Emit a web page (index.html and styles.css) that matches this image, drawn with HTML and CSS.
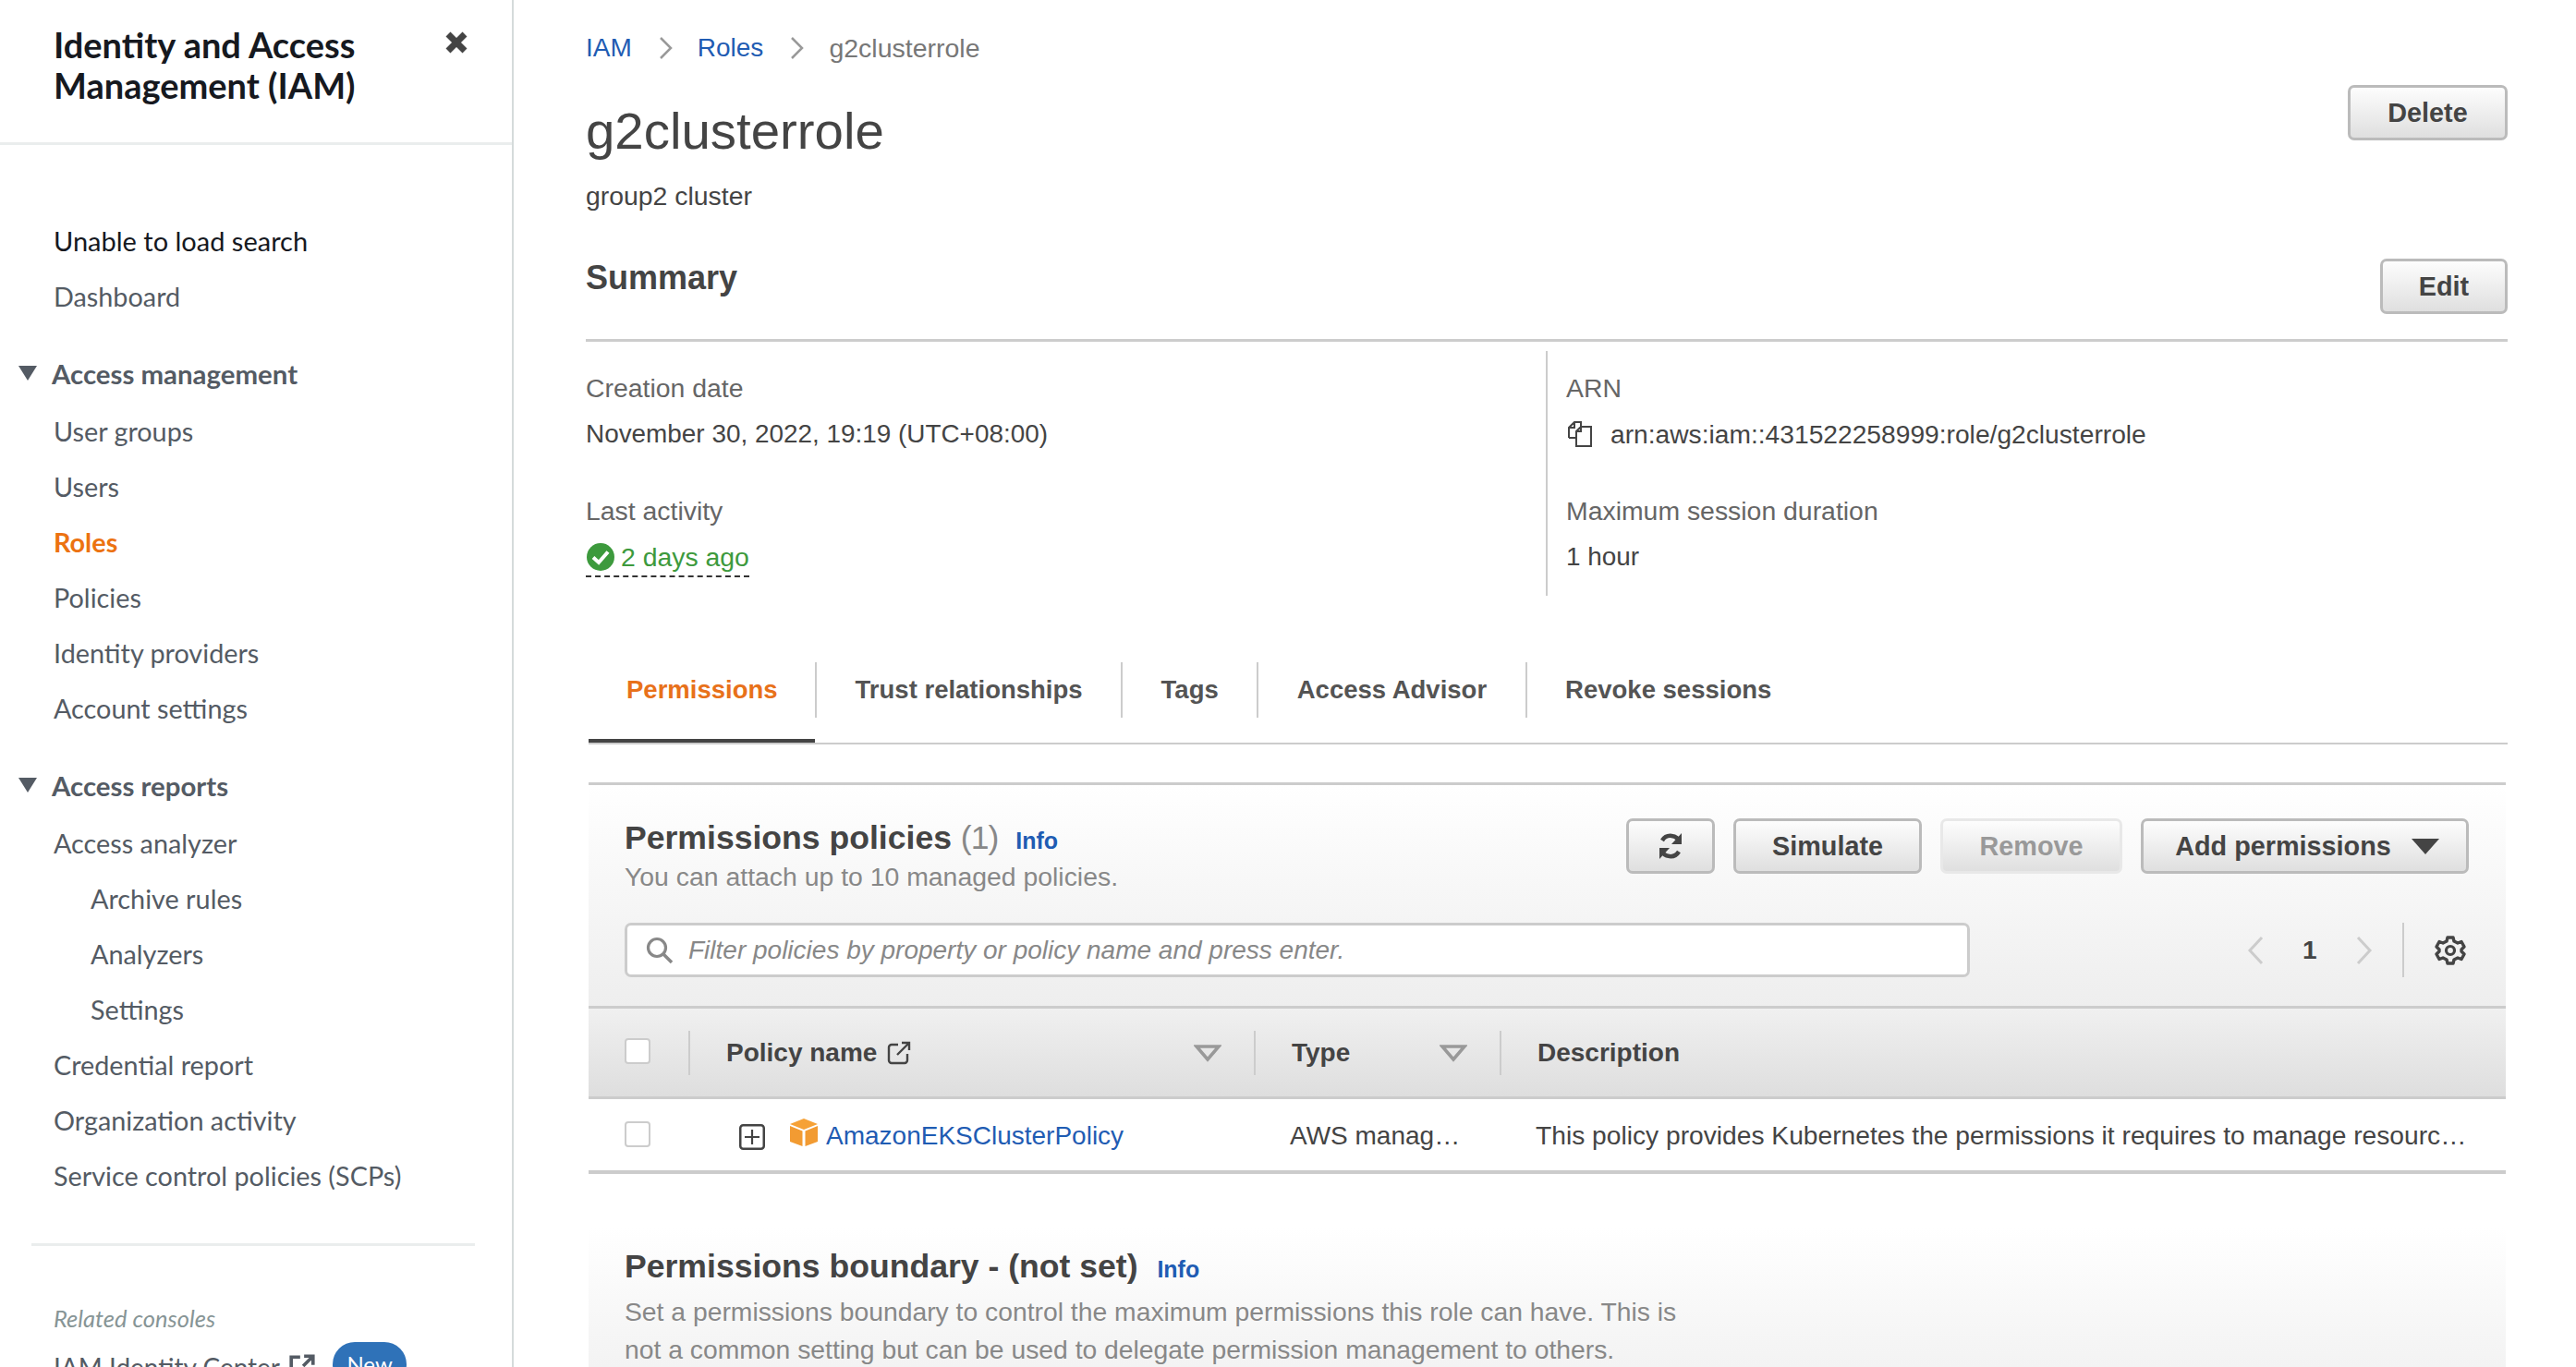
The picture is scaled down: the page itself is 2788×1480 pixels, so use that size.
FILE: index.html

```html
<!DOCTYPE html>
<html lang="en">
<head>
  <meta charset="UTF-8" />
  <title>g2clusterrole - IAM</title>
  <link rel="stylesheet" href="styles.css">
</head>
<body>
  <div class="page">
    <aside class="sidebar">
      <div class="side-head">
        <div class="side-title">Identity and Access<br>Management (IAM)</div>
        <svg class="side-close" width="28" height="28" viewBox="0 0 28 28"><path d="M5 5 L23 23 M23 5 L5 23" stroke="#444" stroke-width="7" fill="none"/></svg>
      </div>
      <nav class="side-nav">
        <a class="nav-item nav-dark">Unable to load search</a>
        <a class="nav-item">Dashboard</a>

        <div class="nav-group"><span class="nav-caret"></span>Access management</div>
        <a class="nav-item">User groups</a>
        <a class="nav-item">Users</a>
        <a class="nav-item nav-active">Roles</a>
        <a class="nav-item">Policies</a>
        <a class="nav-item">Identity providers</a>
        <a class="nav-item">Account settings</a>

        <div class="nav-group"><span class="nav-caret"></span>Access reports</div>
        <a class="nav-item">Access analyzer</a>
        <a class="nav-item nav-sub">Archive rules</a>
        <a class="nav-item nav-sub">Analyzers</a>
        <a class="nav-item nav-sub">Settings</a>
        <a class="nav-item">Credential report</a>
        <a class="nav-item">Organization activity</a>
        <a class="nav-item">Service control policies (SCPs)</a>

        <div class="nav-divider"></div>
        <div class="nav-related">Related consoles</div>
        <a class="nav-item nav-console">IAM Identity Center
          <svg class="ext-icon" width="30" height="30" viewBox="0 0 28 28"><path d="M12 4 H3 V25 H24 V16 M15 13 L25 3 M16 3 H25 V12" stroke="#545b64" stroke-width="3.4" fill="none"/></svg>
          <span class="new-badge">New</span>
        </a>
      </nav>
    </aside>

    <main class="main">
      <div class="crumbs">
        <a class="link">IAM</a>
        <svg class="crumb-sep" width="18" height="28" viewBox="0 0 18 28"><path d="M3 3 L14 14 L3 25" stroke="#999" stroke-width="2.5" fill="none"/></svg>
        <a class="link">Roles</a>
        <svg class="crumb-sep" width="18" height="28" viewBox="0 0 18 28"><path d="M3 3 L14 14 L3 25" stroke="#999" stroke-width="2.5" fill="none"/></svg>
        <span class="crumb-current">g2clusterrole</span>
      </div>

      <div class="title-row">
        <h1>g2clusterrole</h1>
        <button class="btn btn-delete">Delete</button>
      </div>
      <p class="role-desc">group2 cluster</p>

      <div class="summary-head">
        <h2>Summary</h2>
        <button class="btn btn-edit">Edit</button>
      </div>
      <div class="summary-cols">
        <div class="summary-col">
          <div class="field">
            <div class="field-label">Creation date</div>
            <div class="field-value">November 30, 2022, 19:19 (UTC+08:00)</div>
          </div>
          <div class="field">
            <div class="field-label">Last activity</div>
            <div class="field-value"><span class="activity">
              <svg width="32" height="32" viewBox="0 0 32 32"><circle cx="16" cy="16" r="15" fill="#3d9a3d"/><path d="M8 16.5 L14 22 L24 10.5" stroke="#fff" stroke-width="4" fill="none"/></svg>
              2 days ago</span></div>
          </div>
        </div>
        <div class="summary-col summary-right">
          <div class="field">
            <div class="field-label">ARN</div>
            <div class="field-value arn">
              <svg width="30" height="30" viewBox="0 0 30 30"><path d="M3 19 V8 L9 2 H16 V7 M9 2 V8 H3 M3 19 H10 M11 12 L16 7 H27 V28 H11 Z M16 7 V12 H11" stroke="#444" stroke-width="2" fill="none"/></svg>
              arn:aws:iam::431522258999:role/g2clusterrole
            </div>
          </div>
          <div class="field">
            <div class="field-label">Maximum session duration</div>
            <div class="field-value">1 hour</div>
          </div>
        </div>
      </div>

      <div class="tabs">
        <a class="tab tab-active">Permissions</a>
        <span class="tab-sep"></span>
        <a class="tab">Trust relationships</a>
        <span class="tab-sep"></span>
        <a class="tab">Tags</a>
        <span class="tab-sep"></span>
        <a class="tab">Access Advisor</a>
        <span class="tab-sep"></span>
        <a class="tab">Revoke sessions</a>
      </div>

      <section class="panel">
        <div class="panel-head">
          <div class="panel-top">
            <div class="panel-titles">
              <h3>Permissions policies <span class="count">(1)</span> <a class="info">Info</a></h3>
              <p class="panel-sub">You can attach up to 10 managed policies.</p>
            </div>
            <div class="panel-actions">
              <button class="btn btn-refresh">
                <svg width="30" height="34" viewBox="0 0 30 34"><path d="M25 13 A10.500 10.500 0 0 0 6 11 M5 21 A10.500 10.500 0 0 0 24 23" stroke="#444" stroke-width="4.500" fill="none"/><path d="M27 3 V15 H16 Z M3 31 V19 H14 Z" fill="#444"/></svg>
              </button>
              <button class="btn btn-simulate">Simulate</button>
              <button class="btn btn-remove">Remove</button>
              <button class="btn btn-add">Add permissions <span class="btn-caret"></span></button>
            </div>
          </div>
          <div class="filter-row">
            <div class="search">
              <svg width="32" height="32" viewBox="0 0 32 32"><circle cx="13" cy="13" r="9.5" stroke="#888" stroke-width="3.2" fill="none"/><path d="M20 20 L29 29" stroke="#888" stroke-width="3.6"/></svg>
              <span class="search-text">Filter policies by property or policy name and press enter.</span>
            </div>
            <div class="pager">
              <svg width="22" height="34" viewBox="0 0 22 34"><path d="M18 3 L5 17 L18 31" stroke="#ccc" stroke-width="3" fill="none"/></svg>
              <span class="page-num">1</span>
              <svg width="22" height="34" viewBox="0 0 22 34"><path d="M4 3 L17 17 L4 31" stroke="#ccc" stroke-width="3" fill="none"/></svg>
            </div>
            <div class="pager-gear">
              <svg width="34" height="34" viewBox="0 0 34 34"><path d="M14 3 H20 L21 7 L25 9 L29 7.500 L32 13 L29 16 V18 L32 21 L29 26.500 L25 25 L21 27 L20 31 H14 L13 27 L9 25 L5 26.500 L2 21 L5 18 V16 L2 13 L5 7.500 L9 9 L13 7 Z" stroke="#444" stroke-width="3.400" fill="none" stroke-linejoin="round"/><circle cx="17" cy="17" r="4.500" stroke="#444" stroke-width="3.200" fill="none"/></svg>
            </div>
          </div>
        </div>

        <div class="table-grid table-head">
          <div class="cell-check"><span class="checkbox"></span></div>
          <div class="th th-name">
            <span class="th-label">Policy name
              <svg width="28" height="28" viewBox="0 0 28 28"><path d="M13 5 H6 A3 3 0 0 0 3 8 V22 A3 3 0 0 0 6 25 H20 A3 3 0 0 0 23 22 V15 M12 16 L25 3 M17 3 H25 V11" stroke="#444" stroke-width="2.400" fill="none"/></svg>
            </span>
            <svg class="sort" width="30" height="20" viewBox="0 0 30 20"><path d="M3 3 H27 L15 17 Z" stroke="#999" stroke-width="3.500" fill="none"/></svg>
          </div>
          <div class="th th-type">
            <span class="th-label">Type</span>
            <svg class="sort" width="30" height="20" viewBox="0 0 30 20"><path d="M3 3 H27 L15 17 Z" stroke="#999" stroke-width="3.500" fill="none"/></svg>
          </div>
          <div class="th th-desc"><span class="th-label">Description</span></div>
        </div>

        <div class="table-grid table-row">
          <div class="cell-check"><span class="checkbox"></span></div>
          <div class="td-name">
            <svg class="expand" width="28" height="28" viewBox="0 0 28 28"><rect x="1.250" y="1.250" width="25.500" height="25.500" rx="3" stroke="#444" stroke-width="2.500" fill="none"/><path d="M14 6 V22 M6 14 H22" stroke="#444" stroke-width="2.200"/></svg>
            <svg class="cube" width="32" height="32" viewBox="0 0 32 32"><path d="M16 1 L31 7 L16 13 L1 7 Z" fill="#f6a136"/><path d="M1 9 L14.500 14.500 V31 L1 26 Z M31 9 L17.500 14.500 V31 L31 26 Z" fill="#f29b32"/></svg>
            <a class="link">AmazonEKSClusterPolicy</a>
          </div>
          <div class="td-type">AWS manag…</div>
          <div class="td-desc">This policy provides Kubernetes the permissions it requires to manage resourc…</div>
        </div>
      </section>

      <section class="panel-boundary">
        <h3>Permissions boundary - (not set) <a class="info info-boundary">Info</a></h3>
        <p class="boundary-text">Set a permissions boundary to control the maximum permissions this role can have. This is not a common setting but can be used to delegate permission management to others.</p>
      </section>
    </main>
  </div>
</body>
</html>
```

FILE: styles.css

```css
* {
  box-sizing: border-box;
}
html, body {
  margin: 0;
  height: 100%;
  overflow: hidden;
  background: #fff;
}
body {
  font-family: "Liberation Sans", Arial, sans-serif;
  font-size: 28px;
  color: #444;
}
h1, h2, h3, p {
  margin: 0;
}
.page {
  display: flex;
  height: 1480px;
  overflow: hidden;
}

/* sidebar */
.sidebar {
  width: 556px;
  flex: none;
  border-right: 2px solid #d5dbdb;
  font-family: "Lato", "Noto Sans", sans-serif;
  color: #545b64;
  overflow: hidden;
}
.side-head {
  height: 157px;
  padding: 26px 40px 0 58px;
  display: flex;
  justify-content: space-between;
  border-bottom: 3px solid #eaeded;
}
.side-title {
  font-size: 38px;
  line-height: 44px;
  font-weight: bold;
  color: #16191f;
}
.side-close {
  margin: 6px 6px 0 0;
}
.side-nav {
  padding-top: 74px;
}
.nav-item {
  display: block;
  height: 60px;
  line-height: 60px;
  padding-left: 58px;
  font-size: 28.8px;
}
.nav-dark {
  color: #16191f;
  font-size: 29px;
}
.nav-active {
  color: #ec7211;
  font-weight: bold;
}
.nav-sub {
  padding-left: 98px;
}
.nav-group {
  display: flex;
  align-items: center;
  height: 60px;
  margin: 23px 0 3px;
  padding-left: 20px;
  font-size: 29.4px;
  font-weight: bold;
}
.nav-caret {
  width: 0;
  height: 0;
  margin-right: 16px;
  border-left: 10px solid transparent;
  border-right: 10px solid transparent;
  border-top: 16px solid #545b64;
}
.nav-divider {
  height: 3px;
  margin: 43px 40px 0 34px;
  background: #eaeded;
}
.nav-related {
  margin-top: 60px;
  padding-left: 58px;
  height: 36px;
  line-height: 36px;
  font-size: 25.5px;
  font-style: italic;
  color: #879596;
}
.nav-console {
  display: flex;
  align-items: center;
  gap: 9px;
  height: 60px;
  margin-top: 5px;
  font-size: 28px;
}
.new-badge {
  width: 80px;
  height: 48px;
  margin: -6px 0 0 9px;
  border-radius: 24px;
  background: #2f72b8;
  color: #fff;
  font-size: 24px;
  line-height: 48px;
  text-align: center;
  flex: none;
}

/* main column */
.main {
  flex: 1;
  min-width: 0;
  padding: 30px 74px 0 78px;
}
.link {
  color: #1f5cb3;
}
.crumbs {
  display: flex;
  align-items: center;
  height: 44px;
  margin-bottom: 18px;
}
.crumb-sep {
  margin: 0 25px 0 28px;
}
.crumb-current {
  color: #777;
  font-size: 28.5px;
}
.title-row {
  display: flex;
  justify-content: space-between;
  align-items: flex-start;
}
h1 {
  margin-top: 12px;
  font-size: 56.4px;
  line-height: 76px;
  font-weight: normal;
}
.role-desc {
  margin-top: 12px;
  line-height: 40px;
  font-size: 28.4px;
}
.btn {
  display: inline-flex;
  align-items: center;
  justify-content: center;
  height: 60px;
  padding: 0;
  border: 3px solid #bbb;
  border-radius: 7px;
  background: linear-gradient(#fdfdfd, #dfdfdf);
  font-family: "Liberation Sans", Arial, sans-serif;
  font-size: 28.8px;
  font-weight: bold;
  color: #444;
}
.btn-delete {
  width: 173px;
}
.btn-edit {
  width: 138px;
  margin-top: 1px;
}
.summary-head {
  display: flex;
  justify-content: space-between;
  align-items: flex-start;
  height: 91px;
  margin-top: 47px;
  border-bottom: 3px solid #ccc;
}
h2 {
  font-size: 36px;
  line-height: 44px;
}
.summary-cols {
  display: grid;
  grid-template-columns: 1039px 1fr;
  grid-template-rows: 265px;
  margin-top: 10px;
}
.summary-col {
  padding-top: 20px;
}
.summary-right {
  border-left: 2px solid #ccc;
  padding-left: 20px;
}
.field {
  margin-bottom: 43px;
}
.field:last-child {
  margin-bottom: 0;
}
.field-label {
  line-height: 40px;
  margin-bottom: 10px;
  font-size: 28.4px;
  color: #666;
}
.field-value {
  line-height: 40px;
  font-size: 27.9px;
}
.activity {
  display: inline-flex;
  align-items: center;
  gap: 6px;
  height: 42px;
  vertical-align: top;
  font-size: 28.4px;
  color: #3d9a3d;
  border-bottom: 2px dashed #333;
}
.arn {
  display: flex;
  align-items: center;
  gap: 18px;
  font-size: 28.2px;
  margin-top: 1px;
}

/* tabs */
.tabs {
  display: flex;
  height: 116px;
  margin: 45px 0 0 3px;
  border-bottom: 2px solid #ccc;
}
.tab {
  display: flex;
  align-items: center;
  padding: 0 41.5px;
  font-size: 27.5px;
  font-weight: bold;
  color: #545454;
}
.tab-active {
  padding: 0 40.5px 0 41px;
  color: #e8711a;
  box-shadow: inset 0 -4px 0 #444;
}
.tab-sep {
  width: 2px;
  height: 60px;
  align-self: center;
  background: #ccc;
}

/* permissions panel */
.panel {
  margin: 41px 2px 0 3px;
  border-top: 3px solid #ccc;
}
.panel-head {
  height: 242px;
  padding: 35px 40px 0 39px;
  background: linear-gradient(#fff, #eee);
  border-bottom: 3px solid #ccc;
}
.panel-top {
  display: flex;
  justify-content: space-between;
  align-items: flex-start;
  height: 85px;
  margin-bottom: 29px;
}
h3 {
  font-size: 35.6px;
  line-height: 44px;
}
.count {
  font-weight: normal;
  color: #888;
  letter-spacing: -1px;
}
.info {
  margin-left: 9px;
  font-size: 25px;
  font-weight: bold;
  color: #1f5cb3;
}
.info-boundary {
  margin-left: 11px;
}
.panel-sub {
  margin-top: -2px;
  line-height: 38px;
  font-size: 28.4px;
  color: #888;
}
.panel-actions {
  display: flex;
  gap: 20px;
  margin-top: 1px;
}
.btn-refresh {
  width: 96px;
}
.btn-simulate {
  width: 204px;
}
.btn-remove {
  width: 197px;
  border-color: #e8e8e8;
  color: #999;
}
.btn-add {
  width: 355px;
  padding-left: 5px;
  gap: 22px;
}
.btn-caret {
  width: 0;
  height: 0;
  border-left: 15px solid transparent;
  border-right: 15px solid transparent;
  border-top: 17px solid #444;
}
.filter-row {
  display: flex;
  align-items: center;
  height: 59px;
}
.search {
  display: flex;
  align-items: center;
  gap: 15px;
  width: 1456px;
  height: 59px;
  padding-left: 19px;
  border: 3px solid #ccc;
  border-radius: 7px;
  background: #fff;
}
.search-text {
  font-style: italic;
  color: #888;
}
.pager {
  display: flex;
  align-items: center;
  margin-left: 298px;
  gap: 40px;
}
.page-num {
  font-weight: bold;
}
.pager-gear {
  display: flex;
  align-items: center;
  height: 59px;
  margin-left: 30px;
  padding-left: 33px;
  border-left: 2px solid #ccc;
}

/* table */
.table-grid {
  display: grid;
  grid-template-columns: 108px 612px 266px 1fr;
  align-items: center;
}
.table-head {
  height: 98px;
  background: linear-gradient(#f0f0f0, #dedede);
  border-bottom: 3px solid #ccc;
  font-weight: bold;
}
.table-row {
  height: 81px;
  padding-top: 2px;
  border-bottom: 4px solid #ccc;
}
.cell-check {
  padding-left: 40px;
  margin-top: -3px;
  display: flex;
}
.checkbox {
  width: 28px;
  height: 28px;
  margin-left: -1px;
  border: 2px solid #ccc;
  border-radius: 4px;
  background: #fff;
}
.th {
  display: flex;
  align-items: center;
  justify-content: space-between;
  height: 48px;
  border-left: 2px solid #ccc;
  padding-left: 39px;
}
.th-name {
  padding-right: 35px;
}
.th-type {
  padding-right: 35px;
}
.th-label {
  display: inline-flex;
  align-items: center;
  gap: 10px;
}
.td-name {
  display: flex;
  align-items: center;
  padding-left: 55px;
}
.expand {
  margin: 2px 26px 0 0;
}
.cube {
  margin: -8px 8px 0 0;
}
.td-type {
  padding-left: 39px;
}
.td-desc {
  padding-left: 39px;
  white-space: nowrap;
  font-size: 28.2px;
}

/* boundary panel */
.panel-boundary {
  height: 260px;
  margin: 58px 2px 0 3px;
  padding: 20px 0 0 39px;
  background: linear-gradient(#fff, #f3f3f3 150px);
}
.boundary-text {
  width: 1156px;
  margin-top: 4px;
  line-height: 41px;
  font-size: 28.3px;
  color: #888;
}
```
